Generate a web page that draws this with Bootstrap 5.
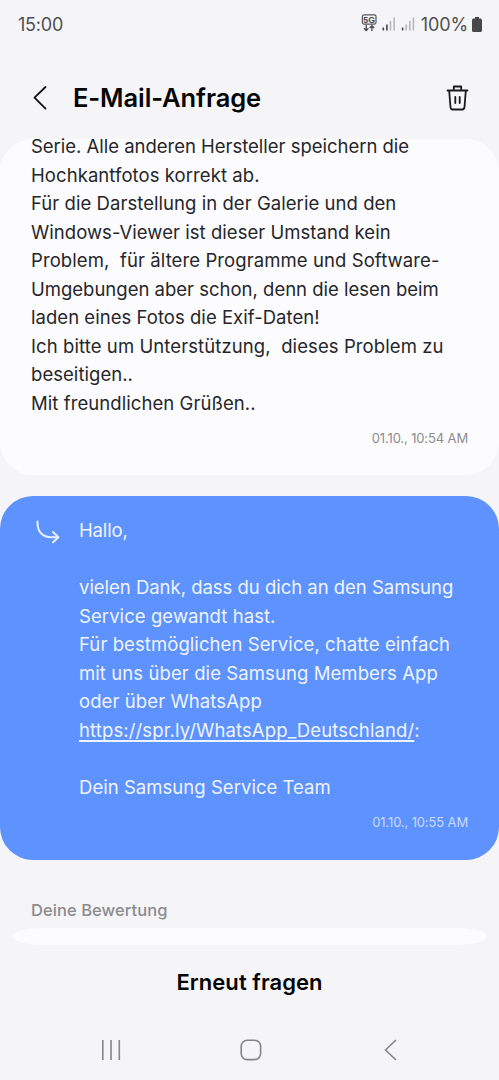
<!DOCTYPE html>
<html lang="de">
<head>
<meta charset="utf-8">
<meta name="viewport" content="width=device-width, initial-scale=1">
<title>E-Mail-Anfrage</title>
<link href="https://cdn.jsdelivr.net/npm/bootstrap@5.3.0/dist/css/bootstrap.min.css" rel="stylesheet">
<style>
body{background:#f5f5f7;font-family:Inter,"Liberation Sans",sans-serif;color:#26262a;height:1080px;overflow:hidden}
svg{display:block;flex:none}
.status{height:48px;padding:0 17px 0 18px;font-size:18px;color:#505052}
.status .clock{letter-spacing:-.2px}
.status .level{letter-spacing:-.1px}
.topbar{height:91px;padding:9px 29px 0 30px}
.topbar h1{font-size:25.5px;font-weight:600;color:#050505;margin-left:18px;letter-spacing:-.1px}
.bubble{border-radius:33px;font-size:18.5px;line-height:28.57px}
.question{background:#fcfcfe;height:336px;padding:1px 31px 0}
.question .lines{margin-top:-8px;line-height:28.52px}
.answer{background:#5e92fe;color:#eef4ff;height:364px;margin-top:21px;padding:20px 31px 0 35px}
.lines{white-space:pre}
.q1,.a2{letter-spacing:-.02px}
.q4,.q7,.a8{letter-spacing:.04px}
.q3,.q9{letter-spacing:.05px}
.q2,.q10,.a3,.a4{letter-spacing:.075px}
.q5,.q8,.a5,.a6{letter-spacing:.09px}
.a1{letter-spacing:-.15px}
.a7{letter-spacing:.125px}
.answer a{color:inherit;text-underline-offset:3px;text-decoration-thickness:1.5px;text-decoration-skip-ink:none}
.stamp{font-size:13px;line-height:20px;letter-spacing:-.13px;color:#8d8d90;margin-top:10px}
.question .stamp{margin-top:11px}
.answer .stamp{color:#c8dafe}
.rating-title{font-size:16.5px;font-weight:500;line-height:24px;color:#8b8b8e;margin:38px 0 6px 31px;letter-spacing:.07px}
.rating{height:17px;margin:0 12px;background:#fcfcfe;border-radius:32px/8.5px}
.again{height:75px;font-size:22px;font-weight:600;color:#050505;letter-spacing:.05px}
.sysnav{height:60px;padding:0 101px 0 101px}
.sysnav .home{margin-right:3px}
</style>
</head>
<body>
<div class="status d-flex align-items-center justify-content-between">
  <span class="clock">15:00</span>
  <div class="d-flex align-items-center">
    <svg width="57" height="20" viewBox="0 0 57 20" fill="#48484a">
      <rect x="2.400" y=".9" width="13.600" height="9.200" rx="1.500" fill="none" stroke="#58585a" stroke-width="1.200"/>
      <text x="9.200" y="8.700" font-size="8.800" font-weight="700" text-anchor="middle" font-family="Liberation Sans, sans-serif">5G</text>
      <path d="M6.200 11v5.500M4 14.300l2.200 2.300 2.200-2.300M11.900 17v-5.500M9.700 14l2.200-2.300 2.200 2.300" fill="none" stroke="#48484a" stroke-width="1.300"/>
      <path d="M22.500 13.500h1.600V16.500h-1.600zM26.100 10.500h1.600v6h-1.600zM41.800 13.500h1.600v3h-1.600z"/>
      <path d="M29.700 7h1.600v9.500h-1.600zM33.300 3.500h1.600v13h-1.600zM45.400 10.500H47v6h-1.600zM49 7h1.600v9.500H49zM52.600 3.500h1.600v13h-1.600z" fill="#b7b7b9"/>
    </svg>
    <span class="level ms-1">100%</span>
    <svg class="ms-1" width="10" height="15" viewBox="0 0 10 15" fill="#48484a"><path d="M3 0h4v1.500h1.500Q10 1.500 10 3v10.500Q10 15 8.500 15h-7Q0 15 0 13.500V3Q0 1.500 1.500 1.500H3z"/></svg>
  </div>
</div>
<header class="topbar d-flex align-items-center">
  <svg width="25" height="28" viewBox="0 0 25 28" fill="none" stroke="#111" stroke-width="1.800" stroke-linecap="round" stroke-linejoin="round"><path d="M15.500 3 4.500 13.600l11 11"/></svg>
  <h1 class="mb-0">E-Mail-Anfrage</h1>
  <svg class="ms-auto" width="25" height="28" viewBox="0 0 25 28" fill="none" stroke="#1a1a1c" stroke-width="1.800" stroke-linecap="round" stroke-linejoin="round"><path d="M2.500 6.500h20M8.800 6V2.500h7.400V6M4.200 7l1.300 16.200q.2 2.300 2.300 2.300h9.400q2.100 0 2.300-2.300L20.800 7M10.300 13v6M14.700 13v6"/></svg>
</header>
<main>
  <section class="bubble question">
    <div class="lines"><div class="q1">Serie. Alle anderen Hersteller speichern die</div><div class="q2">Hochkantfotos korrekt ab.</div><div class="q3">Für die Darstellung in der Galerie und den</div><div class="q4">Windows-Viewer ist dieser Umstand kein</div><div class="q5">Problem,  für ältere Programme und Software-</div><div class="q6">Umgebungen aber schon, denn die lesen beim</div><div class="q7">laden eines Fotos die Exif-Daten!</div><div class="q8">Ich bitte um Unterstützung,  dieses Problem zu</div><div class="q9">beseitigen..</div><div class="q10">Mit freundlichen Grüßen..</div></div>
    <div class="stamp text-end">01.10., 10:54 AM</div>
  </section>
  <section class="bubble answer">
    <div class="d-flex">
      <svg class="me-3" width="28" height="30" viewBox="0 0 28 30" fill="none" stroke="#e8f0ff" stroke-width="2" stroke-linecap="round" stroke-linejoin="round"><path d="M2.500 5.500v1.500C2.500 16 8 21.300 16 21.300h6.500M18 16l5.500 5.300-5.500 5"/></svg>
      <div class="lines"><div class="a1">Hallo,</div><br><div class="a2">vielen Dank, dass du dich an den Samsung</div><div class="a3">Service gewandt hast.</div><div class="a4">Für bestmöglichen Service, chatte einfach</div><div class="a5">mit uns über die Samsung Members App</div><div class="a6">oder über WhatsApp</div><div class="a7"><a href="#">https://spr.ly/WhatsApp_Deutschland/</a>:</div><br><div class="a8">Dein Samsung Service Team</div></div>
    </div>
    <div class="stamp text-end">01.10., 10:55 AM</div>
  </section>
  <h2 class="rating-title">Deine Bewertung</h2>
  <div class="rating"></div>
</main>
<div class="again d-flex align-items-center justify-content-center">Erneut fragen</div>
<nav class="sysnav d-flex align-items-center justify-content-between">
  <svg width="20" height="22" viewBox="0 0 20 22" stroke="#858588" stroke-width="1.600"><path d="M1.800 1v20M10 1v20M18.300 1v20"/></svg>
  <svg class="home" width="22" height="22" viewBox="0 0 22 22" fill="none" stroke="#858588" stroke-width="1.600"><rect x="1.200" y="1.200" width="19.400" height="19.400" rx="6"/></svg>
  <svg width="14" height="22" viewBox="0 0 14 22" fill="none" stroke="#858588" stroke-width="1.600"><path d="M12 1 1.500 11 12 21"/></svg>
</nav>
<script src="https://cdn.jsdelivr.net/npm/bootstrap@5.3.0/dist/js/bootstrap.bundle.min.js"></script>
</body>
</html>
